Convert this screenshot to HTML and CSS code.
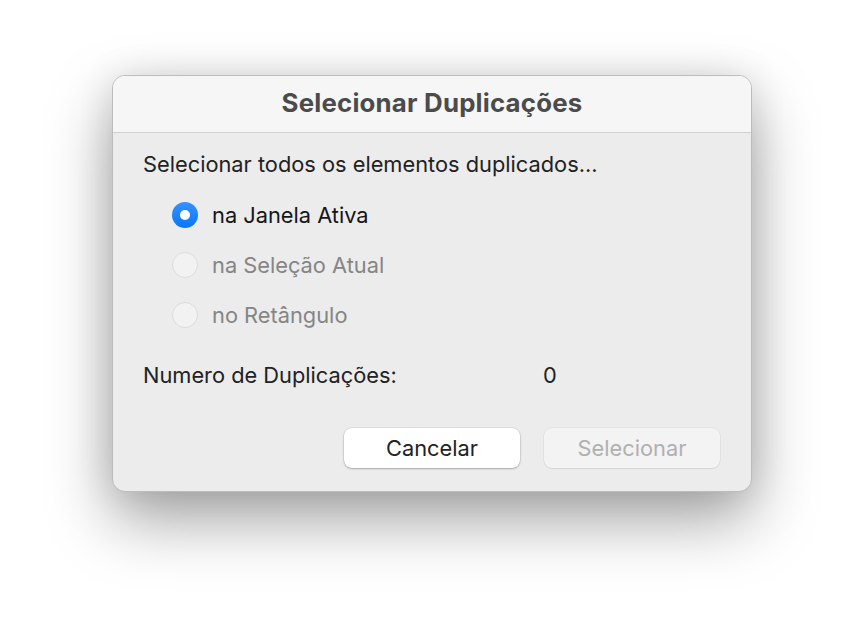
FILE: index.html
```html
<!DOCTYPE html>
<html lang="pt">
<head>
<meta charset="utf-8">
<link rel="stylesheet" href="styles.css">
</head>
<body>
<div class="stage">
  <div class="window">
    <div class="titlebar">Selecionar Duplicações</div>
    <div class="content">
      <div class="intro">Selecionar todos os elementos duplicados...</div>
      <div class="radios">
        <div class="radio-row">
          <span class="radio checked"></span>
          <span class="label">na Janela Ativa</span>
        </div>
        <div class="radio-row disabled">
          <span class="radio"></span>
          <span class="label">na Seleção Atual</span>
        </div>
        <div class="radio-row disabled">
          <span class="radio"></span>
          <span class="label">no Retângulo</span>
        </div>
      </div>
      <div class="count-row">
        <span class="count-label">Numero de Duplicações:</span>
        <span class="count-value">0</span>
      </div>
      <div class="buttons">
        <button class="btn">Cancelar</button>
        <button class="btn disabled">Selecionar</button>
      </div>
    </div>
  </div>
</div>
</body>
</html>
```
FILE: styles.css
```css
html, body {
  margin: 0;
  padding: 0;
  background: #ffffff;
}
body {
  font-family: Inter, "Liberation Sans", sans-serif;
  width: 864px;
  height: 640px;
  overflow: hidden;
}
.stage {
  padding: 75px 112px;
}
.window {
  width: 640px;
  height: 417px;
  box-sizing: border-box;
  border-radius: 13px;
  background: #ececec;
  border: 1px solid #bdbdbd;
  box-shadow: 0 28px 64px rgba(0,0,0,0.36), 0 0 36px rgba(0,0,0,0.10);
  overflow: hidden;
  display: flex;
  flex-direction: column;
}
.titlebar {
  height: 57px;
  box-sizing: border-box;
  padding-bottom: 3px;
  background: #f6f6f6;
  border-bottom: 1px solid #d2d2d2;
  display: flex;
  align-items: center;
  justify-content: center;
  font-weight: 700;
  font-size: 25.8px;
  letter-spacing: 0.2px;
  color: #4b4b4b;
}
.content {
  flex: 1;
  padding: 18px 31px 0 30px;
  display: flex;
  flex-direction: column;
  font-size: 21.8px;
  color: #222;
}
.intro {
  height: 26px;
  line-height: 26px;
}
.radios {
  margin-top: 25px;
  padding-left: 29px;
  display: flex;
  flex-direction: column;
  gap: 24px;
}
.radio-row {
  display: flex;
  align-items: center;
  height: 26px;
  color: #161616;
}
.radio-row.disabled {
  color: #858585;
}
.radio {
  width: 26px;
  height: 26px;
  box-sizing: border-box;
  border-radius: 50%;
  background: #f2f2f2;
  border: 1px solid #dcdcdc;
  margin-right: 14px;
  flex: none;
}
.radio.checked {
  border: none;
  background: linear-gradient(#3592ff, #0a76f6);
  display: flex;
  align-items: center;
  justify-content: center;
}
.radio.checked::after {
  content: "";
  width: 10px;
  height: 10px;
  border-radius: 50%;
  background: #ffffff;
}
.count-row {
  margin-top: 34px;
  height: 26px;
  line-height: 26px;
  display: flex;
}
.count-label {
  width: 400px;
}
.buttons {
  margin-top: 40px;
  display: flex;
  justify-content: flex-end;
  gap: 24px;
}
.btn {
  width: 176px;
  height: 40px;
  border-radius: 8px;
  border: none;
  background: #ffffff;
  box-shadow: 0 1px 2px rgba(0,0,0,0.25), 0 0 0 0.5px rgba(0,0,0,0.12);
  font-family: inherit;
  font-size: 21.8px;
  color: #222;
  padding: 0;
}
.btn.disabled {
  background: #f3f3f3;
  color: #b0b0b0;
  box-shadow: 0 0 0 0.5px rgba(0,0,0,0.08), 0 1px 1px rgba(0,0,0,0.06);
}
```
